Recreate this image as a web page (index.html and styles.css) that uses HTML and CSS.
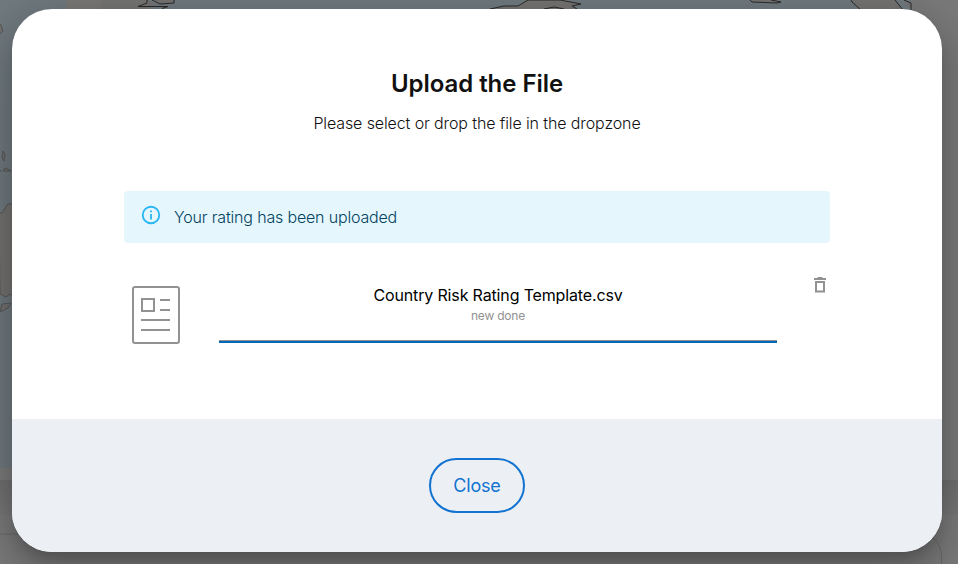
FILE: index.html
```html
<!DOCTYPE html>
<html lang="en">
<head>
<meta charset="utf-8">
<title>Upload the File</title>
<link rel="stylesheet" href="styles.css">
</head>
<body>
<svg class="backdrop" width="958" height="564" viewBox="0 0 958 564" aria-hidden="true">
  <defs>
    <linearGradient id="band" x1="0" y1="0" x2="0" y2="1"><stop offset="0" stop-color="#dedede"/><stop offset="1" stop-color="#eee"/></linearGradient>
  </defs>
  <rect width="958" height="564" fill="#f5f5f5"/>
  <rect width="932" height="468" fill="#def2fc"/>
  <rect x="66" width="84" height="40" fill="#f5f1ef"/>
  <rect x="101" width="49" height="40" fill="#e9e8e6"/>
  <rect x="911" width="47" height="480" fill="#f2f2f2"/>
  <rect x="0" y="480" width="958" height="35" fill="url(#band)"/>
  <g fill="#e9e7e5" stroke="#555" stroke-width="1">
    <path d="M147 0V3L138 6.500H168L162 8.500M152 0L160 4L174 3V0"/>
    <path d="M490 9L504 6H518L528 0H560L581 4L572 6L577 9M544 9L554 7L564 9"/>
    <path d="M750 0L752 2L777 3L781 2L771 0"/>
    <path d="M851 0L852 2L861 10H903L895 0M904 0L911 3V10"/>
  </g>
  <g fill="#e6e2df" stroke="#a9adb1" stroke-width="1">
    <path d="M-2 22L1 25L3 31L0 34"/>
    <path d="M3 151L5 154L4 161L2 158ZM3 170L6 168L11 171H3ZM-1 170L1 171L-1 172Z"/>
    <path d="M-1 213H2L8 204H13V297L10 294L6 297L0 294ZM2 304L11 303L8 308L0 312Z"/>
  </g>
  <path d="M0 534H918Q940 534 941.500 556V564" fill="none" stroke="#d0d0d0"/>
</svg>
<div class="overlay">
  <main class="dialog" role="dialog" aria-labelledby="title">
    <section class="content">
      <h1 id="title"><span>Upload the File</span></h1>
      <p class="subtitle"><span>Please select or drop the file in the dropzone</span></p>
      <div class="alert">
        <svg width="22" height="22" viewBox="0 0 20 20" fill="#29b6f6"><path d="M9.167 5.833h1.666V7.500H9.167zm0 3.334h1.666v5H9.167zM10 1.667a8.333 8.333 0 1 0 0 16.666 8.333 8.333 0 0 0 0-16.666m0 15A6.669 6.669 0 0 1 3.333 10 6.669 6.669 0 0 1 10 3.333 6.669 6.669 0 0 1 16.667 10 6.669 6.669 0 0 1 10 16.667"/></svg>
        <span>Your rating has been uploaded</span>
      </div>
      <div class="file">
        <svg class="doc" width="48" height="58" viewBox="0 0 48 58" fill="none" stroke="#929292" stroke-width="2"><rect x="1" y="1" width="46" height="56" rx="2"/><path d="M10 13H22V25H10ZM28 14H38M28 24H38M9 34H38M9 44H38"/></svg>
        <div class="details">
          <div class="name"><span>Country Risk Rating Template.csv</span></div>
          <div class="status"><span>new done</span></div>
          <div class="progress"></div>
        </div>
        <svg class="trash" width="12" height="16" viewBox="0 0 12 16" fill="none" stroke="#929292"><path d="M0 2H12" stroke-width="2"/><path d="M3.500 .5H8.500"/><path d="M2 5H10V14.500H2Z" stroke-width="2"/></svg>
      </div>
    </section>
    <footer><button type="button"><span>Close</span></button></footer>
  </main>
</div>
</body>
</html>
```
FILE: styles.css
```css
* { box-sizing: border-box; }
body { margin: 0; width: 958px; height: 564px; overflow: hidden; font-family: Inter, "Liberation Sans", sans-serif; color: #111; }
.backdrop { position: absolute; inset: 0; }
.overlay { position: absolute; inset: 0; padding: 9px 16px 12px 12px; background: rgba(0, 0, 0, .5); }
.dialog { height: 543px; display: flex; flex-direction: column; overflow: hidden; border-radius: 40px; background: #fff; box-shadow: 0 11px 15px -7px rgba(0,0,0,.2), 0 24px 38px 3px rgba(0,0,0,.14), 0 9px 46px 8px rgba(0,0,0,.12); }
.content { height: 410px; padding: 56px 112px 0; }
h1 { margin: 0; text-align: center; font-size: 24px; line-height: 38px; font-weight: 600; letter-spacing: -.05px; }
.subtitle { margin: 8px 0 0; text-align: center; font-size: 16px; line-height: 24px; font-weight: 300; letter-spacing: -.11px; }
.alert { display: flex; align-items: center; gap: 12px; height: 52px; margin-top: 56px; padding: 0 16px; border-radius: 4px; background: #e5f6fd; color: #014361; font-size: 16px; font-weight: 300; letter-spacing: -.17px; }
.alert svg { margin-bottom: 4px; }
.file { display: flex; align-items: flex-start; padding: 34px 4px 0 8px; }
.doc { margin-top: 9px; }
.details { width: 558px; margin-left: 39px; text-align: center; }
.name { margin-top: 6px; font-size: 16px; line-height: 24px; color: #000; letter-spacing: -.15px; }
.status { font-size: 12px; line-height: 18px; color: #929292; letter-spacing: -.2px; }
.progress { height: 3px; margin-top: 15px; border-top: 1px solid #929292; background: #0068b5; }
.trash { margin-left: 37px; }
footer { flex: 1; display: flex; justify-content: center; align-items: flex-start; padding-top: 39px; background: #ecf0f5; }
button { width: 96px; height: 55px; padding: 0; border: 2px solid #1273d0; border-radius: 28px; background: transparent; color: #1273d0; font: 400 18px/1 Inter, sans-serif; letter-spacing: -.2px; }
```
